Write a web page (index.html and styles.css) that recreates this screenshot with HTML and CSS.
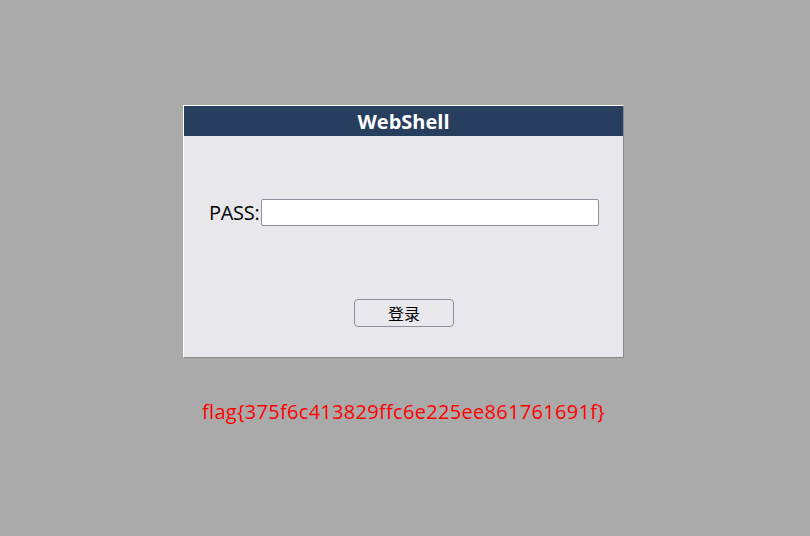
FILE: index.html
```html
<!DOCTYPE html>
<html>
<head>
<meta charset="utf-8">
<link rel="stylesheet" href="styles.css">
</head>
<body>
<div class="page">
  <div class="panel">
    <div class="title">WebShell</div>
    <div class="body">
      <div class="row">
        <label class="label">PASS:</label><input class="pass" type="password">
      </div>
      <div class="btnrow">
        <button class="btn">登录</button>
      </div>
    </div>
  </div>
  <div class="flag">flag{375f6c413829ffc6e225ee861761691f}</div>
</div>
</body>
</html>
```
FILE: styles.css
```css
html, body {
  margin: 0;
  padding: 0;
  background: #aaaaaa;
  font-family: "Open Sans", "Noto Sans CJK SC", sans-serif;
}
.page {
  padding-top: 105px;
  padding-left: 183px;
  width: 441px;
}
.panel {
  width: 439px;
  height: 251px;
  border-top: 1px solid #ffffff;
  border-left: 1px solid #ffffff;
  border-right: 1px solid #8a8a8a;
  border-bottom: 1px solid #8a8a8a;
  background: #e8e8ec;
  display: flex;
  flex-direction: column;
}
.title {
  height: 30px;
  background: #283e5f;
  color: #ffffff;
  font-weight: bold;
  font-size: 20px;
  line-height: 32px;
  text-align: center;
}
.body {
  display: flex;
  flex-direction: column;
}
.row {
  display: flex;
  align-items: center;
  padding-top: 63px;
  padding-left: 25px;
}
.label {
  font-size: 20px;
  color: #000;
  letter-spacing: -0.3px;
}
.pass {
  width: 332px;
  height: 23px;
  margin: 0 0 0 2px;
  padding: 1px 2px;
  border: 1px solid #8f8f9d;
  border-radius: 2px;
  background: #fff;
}
.btnrow {
  display: flex;
  justify-content: center;
  padding-top: 73px;
  padding-left: 1px;
}
.btn {
  width: 100px;
  height: 28px;
  border: 1px solid #8f8f9d;
  border-radius: 4px;
  background: #e9e9ed;
  font-family: "Noto Sans CJK SC", sans-serif;
  font-size: 16px;
  color: #000;
  padding: 0;
}
.flag {
  text-align: center;
  color: #ff0000;
  font-size: 20px;
  letter-spacing: 0.3px;
  margin-top: 40px;
}
```
